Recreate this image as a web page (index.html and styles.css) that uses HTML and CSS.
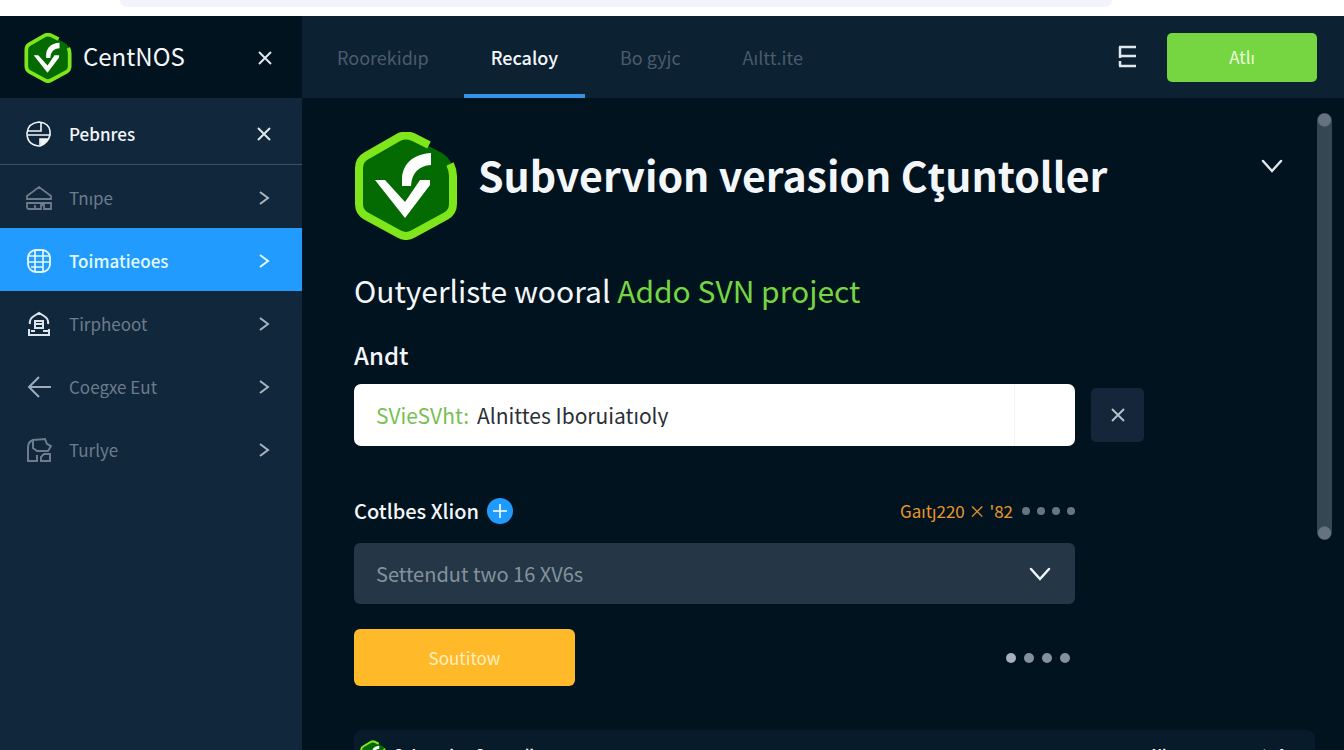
FILE: index.html
```html
<!DOCTYPE html>
<html lang="en">
<head>
    <meta charset="UTF-8">
    <meta name="viewport" content="width=device-width, initial-scale=1.0">
    <title>CentNOS</title>
    <link rel="stylesheet" href="styles.css">
</head>
<body>
    <!-- Shared logo shape -->
    <svg class="defs" aria-hidden="true">
        <symbol id="logo" viewBox="0 0 104 108">
            <path d="M45 6 Q52 2 59 6 L88 21 Q99 28 99 40 V72 Q99 80 92 84 L59 102 Q52 106 45 102 L12 84 Q5 80 5 72 V36 Q5 28 12 24 Z" fill="#046a02"/>
            <path d="M75 13 L59 5 Q52 2 45 5 L12 24 Q5 28 5 36 V72 Q5 80 12 84 L45 102 Q52 106 59 102 L92 84 Q99 80 99 72 V44 Q99 38 96 32" fill="none" stroke="#7fe61c" stroke-width="8"/>
            <path d="M21 48 H31 L51 70 L66 48 H76 V53 L51 86 Z" fill="#fff"/>
            <path d="M48 54 V46 C49 31 60 22 77 21 V33 C65 34 58 40 57 54 Z" fill="#fff"/>
        </symbol>
        <symbol id="cross" viewBox="0 0 16 16">
            <path d="M2 2 L14 14 M14 2 L2 14" fill="none" stroke="currentColor" stroke-width="2"/>
        </symbol>
        <symbol id="chevron" viewBox="0 0 16 16">
            <path d="M4 2 L12 8 L4 14" fill="none" stroke="currentColor" stroke-width="2"/>
        </symbol>
        <symbol id="down" viewBox="0 0 22 14">
            <path d="M2 2 L11 12 L20 2" fill="none" stroke="currentColor" stroke-width="2.5" stroke-linecap="round"/>
        </symbol>
    </svg>

    <div class="browser-bar"><div class="address"></div></div>

    <div class="app">
        <aside class="sidebar">
            <div class="brand">
                <svg class="brand-logo"><use href="#logo"/></svg>
                <span class="brand-name">CentNOS</span>
                <button class="icon-button" aria-label="Close"><svg class="cross"><use href="#cross"/></svg></button>
            </div>
            <div class="side-title">
                <svg class="nav-icon" viewBox="0 0 26 26">
                    <path d="M24 14 V10 Q23 2 13 1 Q2 2 1 12 Q1 24 13 25 M1 10 H15 V2 M2 14 H24 Q22 22 14 25 V18 H22" fill="none" stroke="currentColor" stroke-width="1.6"/>
                    <path d="M14 18 H23 L15 25 Z" fill="currentColor"/>
                </svg>
                <span class="nav-text">Pebnres</span>
                <button class="icon-button" aria-label="Hide"><svg class="cross"><use href="#cross"/></svg></button>
            </div>
            <nav>
                <a class="nav-item" href="#">
                    <svg class="nav-icon" viewBox="0 0 26 26">
                        <path d="M1 14 V11 L13 2 L25 11 V14 Z M1 18 H25 V24 H18 V20 H15 V24 H3 Q1 24 1 22 Z M9 20 V24" fill="none" stroke="currentColor" stroke-width="1.8"/>
                    </svg>
                    <span class="nav-text">Tnıpe</span>
                    <svg class="chevron"><use href="#chevron"/></svg>
                </a>
                <a class="nav-item active" href="#">
                    <svg class="nav-icon" viewBox="0 0 26 26">
                        <rect x="2" y="2" width="22" height="22" rx="8" fill="none" stroke="currentColor" stroke-width="1.8"/>
                        <path d="M9 2 V24 M17 2 V24 M2 8 H24 M2 14 H24 M5 19 H17" fill="none" stroke="currentColor" stroke-width="1.6"/>
                    </svg>
                    <span class="nav-text">Toimatieoes</span>
                    <svg class="chevron"><use href="#chevron"/></svg>
                </a>
                <a class="nav-item" href="#">
                    <svg class="nav-icon bright" viewBox="0 0 26 26">
                        <path d="M4 13 Q3 8 8 5 L13 2 L18 5 Q23 8 22 13 M9 17 V10 H17 V17 Z M10 13 H16 M3 18 V24 H23 V18 M5 20 H9 M17 20 H22" fill="none" stroke="currentColor" stroke-width="2"/>
                    </svg>
                    <span class="nav-text">Tirpheoot</span>
                    <svg class="chevron"><use href="#chevron"/></svg>
                </a>
                <a class="nav-item" href="#">
                    <svg class="nav-icon light" viewBox="0 0 26 26">
                        <path d="M25 13 H3 M13 3 L3 13 L13 23" fill="none" stroke="currentColor" stroke-width="2"/>
                    </svg>
                    <span class="nav-text">Coegxe Eut</span>
                    <svg class="chevron"><use href="#chevron"/></svg>
                </a>
                <a class="nav-item" href="#">
                    <svg class="nav-icon" viewBox="0 0 26 26">
                        <path d="M7 3 L19 2 L21 7 L25 9 L22 14 H11 L7 11 Z M7 3 Q2 5 2 10 V24 H11 V18 M15 24 V20 L18 17 H24 V24 Z" fill="none" stroke="currentColor" stroke-width="2"/>
                    </svg>
                    <span class="nav-text">Turlye</span>
                    <svg class="chevron"><use href="#chevron"/></svg>
                </a>
            </nav>
        </aside>

        <div class="workspace">
            <header class="topbar">
                <nav class="tabs">
                    <a class="tab" href="#">Roorekidıp</a>
                    <a class="tab active" href="#">Recaloy</a>
                    <a class="tab" href="#">Bo gyjc</a>
                    <a class="tab" href="#">Aıltt.ite</a>
                </nav>
                <button class="icon-button menu" aria-label="Menu">
                    <svg class="menu-icon" viewBox="0 0 20 24">
                        <path d="M2 2 H19 M2 11 H19 M2 21 H19 M3 2 V13 M3 16 V21" fill="none" stroke="currentColor" stroke-width="2.5"/>
                    </svg>
                </button>
                <button class="add-button">Atlı</button>
            </header>

            <div class="body">
                <main class="content">
                    <div class="hero">
                        <svg class="hero-logo"><use href="#logo"/></svg>
                        <h1>Subvervion verasion Cţuntoller</h1>
                        <button class="icon-button expand" aria-label="Expand"><svg class="down"><use href="#down"/></svg></button>
                    </div>
                    <h2>Outyerliste wooral <span class="accent">Addo SVN project</span></h2>

                    <form class="form">
                        <label class="label" for="name">Andt</label>
                        <div class="input-row">
                            <div class="input-box">
                                <label class="prefix" for="name">SVieSVht:</label>
                                <input id="name" type="text" value="Alnittes Iboruiatıoly">
                                <span class="input-end"></span>
                            </div>
                            <button type="button" class="clear-button" aria-label="Clear"><svg class="cross"><use href="#cross"/></svg></button>
                        </div>

                        <div class="label-row">
                            <label class="label" for="collection">Cotlbes Xlion</label>
                            <button type="button" class="plus" aria-label="Add">
                                <svg viewBox="0 0 26 26"><circle cx="13" cy="13" r="13" fill="#1f9bff"/><path d="M13 6 V20 M6 13 H20" stroke="#fff" stroke-width="1.6"/></svg>
                            </button>
                            <span class="count">Gaıtȷ220 × '82</span>
                            <span class="dots small"><i></i><i></i><i></i><i></i></span>
                        </div>
                        <div class="select-box">
                            <select id="collection">
                                <option>Settendut two 16 XV6s</option>
                            </select>
                            <svg class="down"><use href="#down"/></svg>
                        </div>

                        <div class="actions">
                            <button type="button" class="submit">Soutitow</button>
                            <span class="dots"><i></i><i></i><i></i><i></i></span>
                        </div>
                    </form>

                    <div class="card">
                        <svg class="card-logo"><use href="#logo"/></svg>
                        <span class="card-title">Subversion Countoller</span>
                        <span class="card-side">Nianese</span>
                        <span class="card-side">ceʻtɪAu</span>
                    </div>
                </main>
                <div class="scrollbar"><div class="thumb"></div></div>
            </div>
        </div>
    </div>
</body>
</html>
```
FILE: styles.css
```css
:root {
    --main: #01131e;
    --sidebar: #11273b;
    --topbar: #0c2132;
    --blue: #229bff;
    --green: #76d642;
    --orange: #ffb929;
    --muted: #6c7c8c;
    --text: #f4f7fa;
}

* {
    box-sizing: border-box;
}

body {
    margin: 0;
    height: 100vh;
    display: flex;
    flex-direction: column;
    overflow: hidden;
    background-color: var(--main);
    color: var(--text);
    font-family: 'Noto Sans CJK JP', 'Noto Sans', sans-serif;
    font-size: 17px;
    line-height: 24px;
}

button, input, select {
    font: inherit;
    color: inherit;
    border: none;
    padding: 0;
    background: none;
}

button {
    cursor: pointer;
}

a {
    color: inherit;
    text-decoration: none;
}

svg {
    display: block;
    flex: none;
}

.defs {
    display: none;
}

.browser-bar {
    flex: none;
    height: 16px;
    padding: 0 232px 0 120px;
    background-color: #fff;
}

.address {
    height: 7px;
    border-radius: 0 0 12px 12px;
    background-color: #f3f4fb;
}

.app {
    flex: 1;
    min-height: 0;
    display: flex;
}

/* Sidebar */
.sidebar {
    flex: none;
    width: 302px;
    background-color: var(--sidebar);
}

.brand {
    display: flex;
    align-items: center;
    height: 82px;
    padding: 2px 29px 0 24px;
    background-color: var(--main);
}

.brand-logo {
    width: 48px;
    height: 50px;
}

.brand-name {
    flex: 1;
    margin-left: 11px;
    padding-bottom: 4px;
    font-size: 24px;
    line-height: 32px;
}

.icon-button {
    display: flex;
    color: #dfe6ec;
}

.cross {
    width: 16px;
    height: 16px;
}

.side-title, .nav-item {
    display: flex;
    align-items: center;
    padding: 2px 30px 0 26px;
}

.side-title {
    height: 67px;
    padding-top: 5px;
    border-bottom: 1px solid #3b5063;
    font-weight: 500;
}

.nav-item {
    height: 63px;
    color: var(--muted);
}

.nav-item.active {
    background-color: var(--blue);
    color: #e4faff;
    font-weight: 500;
}

.nav-icon {
    width: 26px;
    height: 26px;
}

.nav-icon.bright {
    color: #dce5ec;
}

.nav-icon.light {
    color: #9eacb9;
}

.nav-text {
    flex: 1;
    margin-left: 17px;
}

.chevron {
    width: 16px;
    height: 16px;
    color: #a9b6c2;
}

.active .chevron {
    color: #e4faff;
}

/* Top bar */
.workspace {
    flex: 1;
    min-width: 0;
    display: flex;
    flex-direction: column;
}

.topbar {
    flex: none;
    display: flex;
    align-items: center;
    height: 82px;
    padding: 0 27px 0 8px;
    background-color: var(--topbar);
}

.tabs {
    flex: 1;
    display: flex;
    gap: 8px;
    height: 100%;
}

.tab {
    display: flex;
    align-items: center;
    padding: 4px 27px 0;
    border-bottom: 4px solid transparent;
    color: #4a5b6d;
    font-size: 18px;
}

.tab.active {
    border-color: #3494e8;
    color: var(--text);
    font-weight: 500;
}

.menu {
    margin-right: 30px;
}

.menu-icon {
    width: 20px;
    height: 24px;
}

.add-button {
    width: 150px;
    height: 49px;
    border-radius: 5px;
    background-color: var(--green);
    color: #eaffdc;
}

/* Content */
.body {
    flex: 1;
    min-height: 0;
    display: flex;
    padding: 0 12px 0 52px;
}

.content {
    flex: 1;
    padding-top: 34px;
}

.hero {
    display: flex;
    align-items: flex-start;
}

.hero-logo {
    width: 104px;
    height: 108px;
}

h1 {
    flex: 1;
    margin: 14px 0 0 20px;
    font-size: 41px;
    line-height: 56px;
    font-weight: 700;
    white-space: nowrap;
}

.expand {
    margin: 27px 32px 0 0;
}

.down {
    width: 22px;
    height: 14px;
}

h2 {
    margin: 30px 0 29px;
    font-size: 30px;
    line-height: 40px;
    font-weight: 400;
}

.accent {
    color: var(--green);
}

.form {
    max-width: 721px;
}

.label {
    font-size: 24px;
    line-height: 32px;
    font-weight: 500;
}

form > .label {
    display: block;
    margin-bottom: 13px;
}

.input-row {
    display: flex;
    align-items: center;
    margin-right: -69px;
}

.input-box {
    flex: 1;
    display: flex;
    align-items: center;
    height: 62px;
    padding-left: 22px;
    border-radius: 7px;
    background-color: #fff;
    color: #2b2f36;
    font-size: 21px;
}

.prefix {
    color: #76bf52;
}

.input-box input {
    flex: 1;
    min-width: 0;
    margin-left: 8px;
    outline: none;
}

.input-end {
    width: 61px;
    height: 100%;
    border-left: 1px solid #f4f4f4;
}

.clear-button {
    display: flex;
    align-items: center;
    justify-content: center;
    width: 53px;
    height: 54px;
    margin-left: 16px;
    border-radius: 5px;
    background-color: #14273a;
    color: #b3c0cc;
}

.label-row {
    display: flex;
    align-items: center;
    margin: 49px 0 16px;
}

.label-row .label {
    font-size: 20px;
}

.plus {
    width: 26px;
    height: 26px;
    margin-left: 8px;
}

.count {
    margin-left: auto;
    color: #e8962c;
}

.dots {
    display: flex;
    gap: 8px;
    margin-right: 5px;
}

.dots i {
    width: 10px;
    height: 10px;
    border-radius: 50%;
    background-color: #84919d;
}

.dots i:first-child {
    background-color: #a5b1bc;
}

.dots.small {
    gap: 7px;
    margin: 0 0 0 9px;
}

.dots.small i {
    width: 8px;
    height: 8px;
    background-color: #66757f;
}

.select-box {
    display: grid;
    align-items: center;
    border-radius: 6px;
    background-color: #253746;
}

.select-box select, .select-box .down {
    grid-area: 1 / 1;
}

.select-box select {
    width: 100%;
    height: 61px;
    padding-left: 22px;
    appearance: none;
    color: #84929e;
    font-size: 20px;
}

.select-box .down {
    justify-self: end;
    margin-right: 24px;
    pointer-events: none;
}

.actions {
    display: flex;
    align-items: center;
    justify-content: space-between;
    margin-top: 25px;
}

.submit {
    width: 221px;
    height: 57px;
    border-radius: 6px;
    background-color: var(--orange);
    color: #fff0c0;
}

.card {
    display: flex;
    align-items: center;
    gap: 8px;
    height: 48px;
    margin-top: 44px;
    padding: 0 20px 0 6px;
    border-radius: 8px;
    background-color: #071b2b;
    font-size: 14px;
    font-weight: 700;
}

.card-logo {
    width: 26px;
    height: 28px;
}

.card-title {
    flex: 1;
}

.card-side {
    margin-left: 32px;
}

.scrollbar {
    flex: none;
    width: 15px;
    margin: 15px 0 0 2px;
}

.thumb {
    height: 427px;
    border-radius: 8px;
    background: radial-gradient(circle at 50% 7px, #657380 6px, transparent 7px), radial-gradient(circle at 50% 420px, #657380 6px, transparent 7px), #364653;
}
```
